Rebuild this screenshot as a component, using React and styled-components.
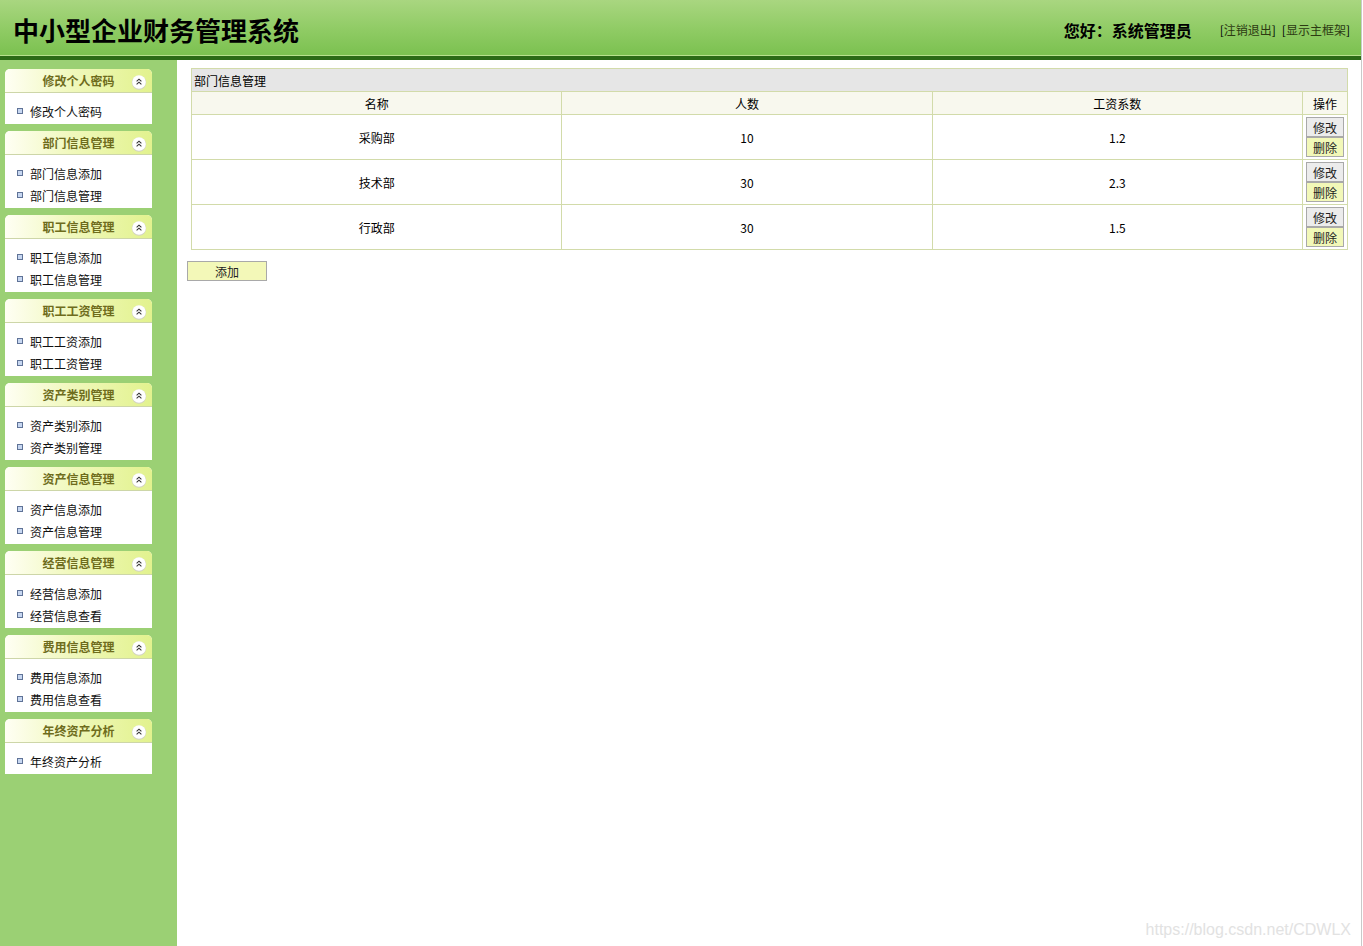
import React from 'react';
import styled, { createGlobalStyle } from 'styled-components';

const GlobalStyle = createGlobalStyle`
  html, body {
    margin: 0;
    padding: 0;
    height: 100%;
    background: #fff;
  }
  body {
    font-family: "Noto Sans CJK SC", "Liberation Sans", sans-serif;
    font-size: 12px;
    color: #000;
  }
  #root {
    height: 100%;
  }
`;

const menus = [
  { title: '修改个人密码', items: ['修改个人密码'] },
  { title: '部门信息管理', items: ['部门信息添加', '部门信息管理'] },
  { title: '职工信息管理', items: ['职工信息添加', '职工信息管理'] },
  { title: '职工工资管理', items: ['职工工资添加', '职工工资管理'] },
  { title: '资产类别管理', items: ['资产类别添加', '资产类别管理'] },
  { title: '资产信息管理', items: ['资产信息添加', '资产信息管理'] },
  { title: '经营信息管理', items: ['经营信息添加', '经营信息查看'] },
  { title: '费用信息管理', items: ['费用信息添加', '费用信息查看'] },
  { title: '年终资产分析', items: ['年终资产分析'] }
];

const departments = [
  { name: '采购部', count: '10', ratio: '1.2' },
  { name: '技术部', count: '30', ratio: '2.3' },
  { name: '行政部', count: '30', ratio: '1.5' }
];

const CollapseIcon = () => (
  <svg width="16" height="16" viewBox="0 0 16 16">
    <circle cx="8" cy="8.6" r="7.2" fill="#d2d2c4" />
    <circle cx="8" cy="8" r="6.8" fill="#fff" />
    <path d="M5.6 7.4 L8 5.2 L10.4 7.4 M5.6 10.4 L8 8.2 L10.4 10.4" fill="none" stroke="#333" strokeWidth="1.1" />
  </svg>
);

const App = () => {
  return (
    <>
      <GlobalStyle />
      <Page>
        <Top>
          <Title>中小型企业财务管理系统</Title>
          <UserBox>
            <Hello>您好：系统管理员</Hello>
            <TopLink>
              [<span>注销退出</span>]
            </TopLink>
            <TopLink>
              [<span>显示主框架</span>]
            </TopLink>
          </UserBox>
        </Top>
        <Main>
          <Sidebar>
            {menus.map(menu => (
              <Panel key={menu.title}>
                <PanelHead>
                  {menu.title}
                  <IconWrap>
                    <CollapseIcon />
                  </IconWrap>
                </PanelHead>
                <PanelBody>
                  {menu.items.map(item => (
                    <MenuItem key={item}>
                      <Bullet />
                      {item}
                    </MenuItem>
                  ))}
                </PanelBody>
              </Panel>
            ))}
          </Sidebar>
          <Content>
            <DataTable>
              <colgroup>
                <col />
                <col />
                <col />
                <col style={{ width: '45px' }} />
              </colgroup>
              <tbody>
                <tr>
                  <Caption colSpan={4}>部门信息管理</Caption>
                </tr>
                <tr>
                  <Th>名称</Th>
                  <Th>人数</Th>
                  <Th>工资系数</Th>
                  <Th>操作</Th>
                </tr>
                {departments.map(dep => (
                  <tr key={dep.name}>
                    <Td>{dep.name}</Td>
                    <Td>{dep.count}</Td>
                    <Td>{dep.ratio}</Td>
                    <OpCell>
                      <OpButton>修改</OpButton>
                      <OpButton $danger>删除</OpButton>
                    </OpCell>
                  </tr>
                ))}
              </tbody>
            </DataTable>
            <AddButton>添加</AddButton>
          </Content>
        </Main>
        <Watermark>https://blog.csdn.net/CDWLX</Watermark>
      </Page>
    </>
  );
};

const Page = styled.div`
  position: relative;
  display: flex;
  flex-direction: column;
  min-height: 100vh;
  width: calc(100% - 2px);
  border-right: 1px solid #c9c9c9;
`;

const Top = styled.div`
  display: flex;
  align-items: center;
  justify-content: space-between;
  height: 55px;
  padding: 0 11px 0 13px;
  background: linear-gradient(to bottom, #a9d680 0%, #8fcb64 55%, #7bc150 100%);
  border-bottom: 1px solid #b6e08c;
  box-shadow: 0 4px 0 #2b6a16;
  margin-bottom: 4px;
`;

const Title = styled.h1`
  margin: 0;
  padding-top: 4px;
  font-size: 26px;
  font-weight: 700;
  color: #000;
`;

const UserBox = styled.div`
  display: flex;
  align-items: center;
  padding-top: 4px;
`;

const Hello = styled.span`
  font-size: 16px;
  font-weight: 700;
  margin-right: 22px;
`;

const TopLink = styled.span`
  font-size: 12px;
  color: #000;
  margin-left: 6px;
  span {
    color: #2c3a12;
  }
`;

const Main = styled.div`
  display: flex;
  flex: 1;
`;

const Sidebar = styled.div`
  width: 177px;
  flex-shrink: 0;
  background: #9bd074;
  padding: 9px 0 0 5px;
  box-sizing: border-box;
`;

const Panel = styled.div`
  width: 147px;
  margin-bottom: 7px;
  background: #fff;
  border-radius: 5px 5px 0 0;
`;

const PanelHead = styled.div`
  position: relative;
  height: 23px;
  line-height: 23px;
  text-align: center;
  font-weight: 700;
  font-size: 12px;
  color: #6e6c1c;
  border-radius: 5px 5px 0 0;
  background: linear-gradient(to right, #fffff4 0%, #f0f8bc 45%, #e2f28e 100%);
  border-bottom: 1px solid #cdd6a8;
`;

const IconWrap = styled.span`
  position: absolute;
  right: 5px;
  top: 4px;
  height: 16px;
`;

const PanelBody = styled.ul`
  list-style: none;
  margin: 0;
  padding: 7px 0 2px 12px;
`;

const MenuItem = styled.li`
  display: flex;
  align-items: center;
  height: 22px;
  font-size: 12px;
  color: #111;
`;

const Bullet = styled.span`
  width: 4px;
  height: 4px;
  border: 1px solid #5f7397;
  background: #c7d7f1;
  margin-right: 7px;
`;

const Content = styled.div`
  flex: 1;
  padding: 8px 13px 0 10px;
`;

const DataTable = styled.table`
  width: calc(100% - 4px);
  margin-left: 4px;
  table-layout: fixed;
  border-collapse: collapse;
  border: 1px solid #d2dbaa;
  font-size: 12px;
`;

const Caption = styled.td`
  height: 22px;
  background: #e6e6e6;
  padding: 0 2px;
  text-align: left;
  border-bottom: 1px solid #d2dbaa;
`;

const Th = styled.td`
  height: 22px;
  padding: 0;
  background: #f8f8ee;
  text-align: center;
  border: 1px solid #d2dbaa;
`;

const Td = styled.td`
  height: 44px;
  padding: 0;
  text-align: center;
  border: 1px solid #d2dbaa;
`;

const OpCell = styled.td`
  padding: 2px 3px;
  border: 1px solid #d2dbaa;
  text-align: center;
  vertical-align: top;
`;

const OpButton = styled.button`
  display: block;
  width: 38px;
  height: 20px;
  margin: 0 auto;
  padding: 0;
  font-family: inherit;
  font-size: 12px;
  color: #222;
  background: ${p => (p.$danger ? '#f2f8b8' : '#ececec')};
  border: 1px solid #a9a9a9;
`;

const AddButton = styled.button`
  display: block;
  margin-top: 11px;
  width: 80px;
  height: 20px;
  padding: 0;
  font-family: inherit;
  font-size: 12px;
  color: #222;
  background: #f3f8b8;
  border: 1px solid #a9a9a9;
`;

const Watermark = styled.div`
  position: absolute;
  right: 10px;
  bottom: 7px;
  font-family: "Liberation Sans", Arial, sans-serif;
  font-size: 16px;
  color: #e2e2e2;
  pointer-events: none;
`;

export default App;
